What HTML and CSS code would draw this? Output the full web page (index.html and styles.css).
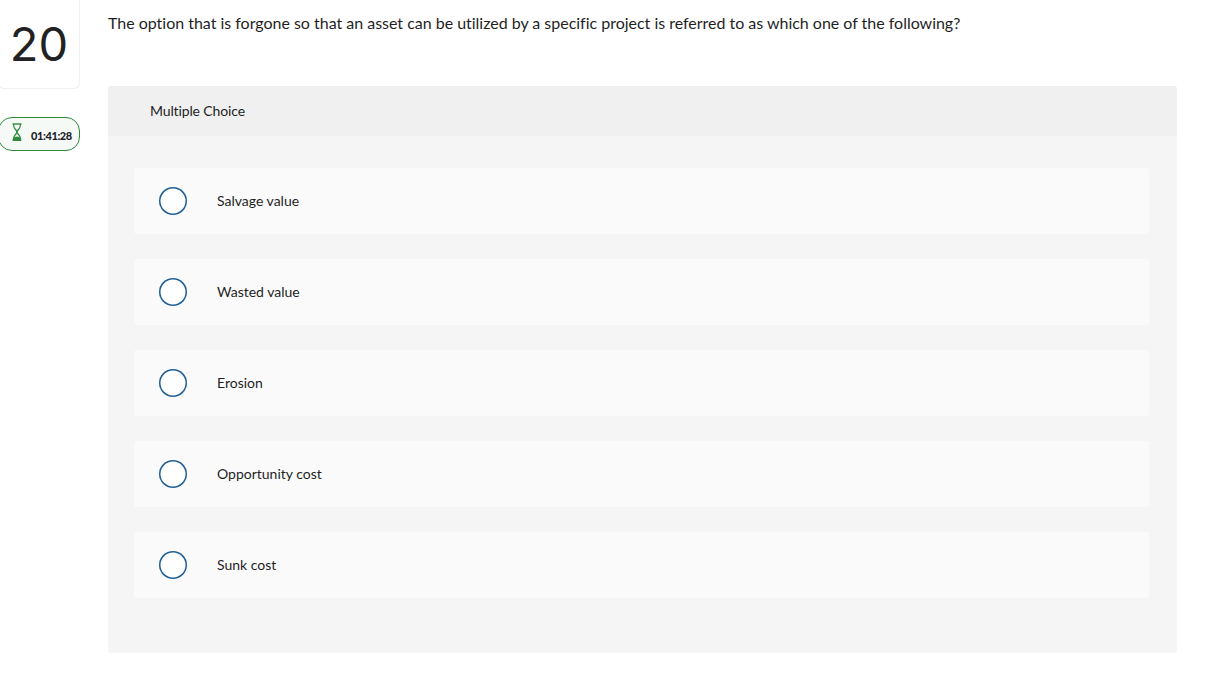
FILE: index.html
```html
<!DOCTYPE html>
<html lang="en">
<head>
  <meta charset="UTF-8">
  <title>Question 20</title>
  <link rel="stylesheet" href="styles.css">
</head>
<body>
  <div class="page">
    <div class="sidebar">
      <div class="number-card">20</div>
      <div class="timer">
        <svg class="timer-icon" width="12" height="18" viewBox="0 0 12 18">
          <path d="M1.500 1h9" fill="none" stroke="#2e8b3d" stroke-width="1.400"/>
          <path d="M2.500 1c0 2.200.5 3.800 1.600 5L5 7c.9 1 .9 3 0 4l-.9 1c-1.100 1.200-1.600 2.800-1.600 5M9.500 1c0 2.200-.5 3.800-1.600 5L7 7c-.9 1-.9 3 0 4l.9 1c1.100 1.200 1.600 2.800 1.600 5" fill="none" stroke="#2e8b3d" stroke-width="1.200"/>
          <path d="M1.500 17c0-2 2-3 4.500-3.500 2.500.5 4.500 1.500 4.500 3.500 0 .5-.4 1-1 1h-7c-.6 0-1-.5-1-1z" fill="#2e8b3d"/>
        </svg>
        <span class="timer-text">01:41:28</span>
      </div>
    </div>
    <div class="main">
      <p class="question">The option that is forgone so that an asset can be utilized by a specific project is referred to as which one of the following?</p>
      <div class="panel">
        <div class="panel-header">Multiple Choice</div>
        <div class="options">
          <div class="option"><span class="radio"></span><span class="label">Salvage value</span></div>
          <div class="option"><span class="radio"></span><span class="label">Wasted value</span></div>
          <div class="option"><span class="radio"></span><span class="label">Erosion</span></div>
          <div class="option"><span class="radio"></span><span class="label">Opportunity cost</span></div>
          <div class="option"><span class="radio"></span><span class="label">Sunk cost</span></div>
        </div>
      </div>
    </div>
  </div>
</body>
</html>
```

FILE: styles.css
```css
html, body {
  margin: 0;
  padding: 0;
  overflow: hidden;
}

body {
  font-family: "Lato", "Open Sans", Arial, sans-serif;
  font-variant-ligatures: none;
  color: #1f1f1f;
  background-color: #fff;
}

.page {
  display: flex;
  width: 1177px;
  height: 693px;
}

.sidebar {
  width: 82px;
  margin-left: -2px;
  flex-shrink: 0;
}

.number-card {
  height: 89px;
  box-sizing: border-box;
  border: 1px solid #f0f0f0;
  border-top: none;
  border-radius: 0 0 6px 6px;
  padding-bottom: 2px;
  display: flex;
  align-items: center;
  justify-content: center;
  font-family: "Inter", sans-serif;
  font-size: 47px;
  font-weight: 400;
  line-height: 1;
  color: #222;
}

.timer {
  margin-top: 28px;
  height: 34px;
  box-sizing: border-box;
  border: 1px solid #2e8b3d;
  border-radius: 14px;
  background-color: #f6faf6;
  display: flex;
  align-items: center;
  padding-left: 12px;
}

.timer-icon {
  margin-top: -4px;
  flex-shrink: 0;
}

.timer-text {
  margin-left: 8px;
  margin-top: 3px;
  font-family: "Lato", Arial, sans-serif;
  font-size: 11px;
  font-weight: 900;
  letter-spacing: -0.4px;
  color: #1f1f2b;
}

.main {
  margin-left: 28px;
  flex: 1;
}

.question {
  margin: 13px 0 0;
  height: 73px;
  font-size: 16px;
  line-height: 20px;
  letter-spacing: -0.016px;
}

.panel {
  height: 567px;
  background-color: #f5f5f5;
  border-radius: 3px;
}

.panel-header {
  height: 50px;
  background-color: #f0f0f0;
  border-radius: 3px 3px 0 0;
  padding-left: 42px;
  font-size: 14px;
  line-height: 49px;
  letter-spacing: -0.13px;
}

.options {
  display: flex;
  flex-direction: column;
  gap: 25px;
  padding: 32px 28px 0 26px;
}

.option {
  height: 66px;
  background-color: #fafafa;
  border-radius: 3px;
  display: flex;
  align-items: center;
  padding-left: 25px;
}

.radio {
  width: 28px;
  height: 28px;
  box-shadow: inset 0 0 0 1.5px #1f5f95;
  border-radius: 50%;
  background-color: #fff;
  flex-shrink: 0;
}

.label {
  margin-left: 30px;
  margin-top: -2px;
  font-size: 14px;
}
```
